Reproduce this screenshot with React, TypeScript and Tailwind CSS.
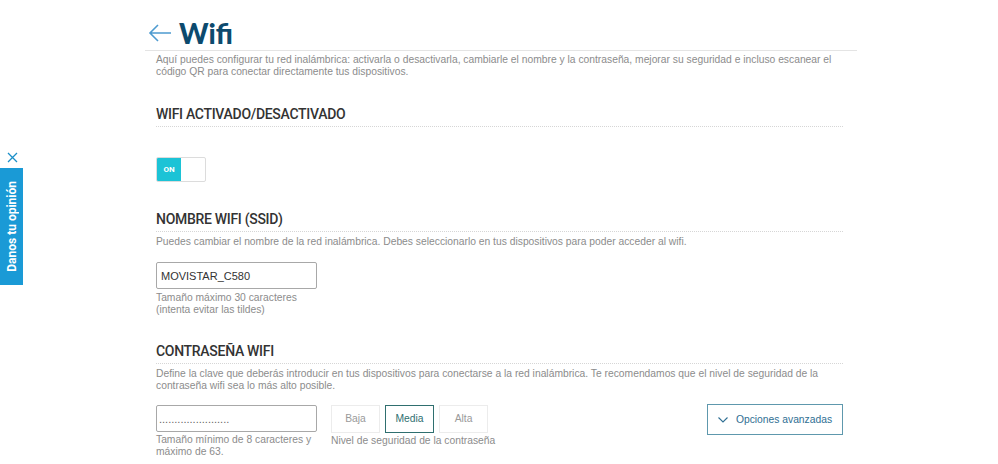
import React, { useState } from 'react';

function SectionTitle({ children }: { children: React.ReactNode }) {
  return (
    <div className="border-b border-dotted border-[#d6d6d6] pb-[3px]">
      <h2 className="font-[family-name:Roboto,sans-serif] text-[14px] font-medium leading-[18px] tracking-[-0.3px] text-[#333]">
        {children}
      </h2>
    </div>
  );
}

export default function App() {
  const [on, setOn] = useState(true);
  const [level, setLevel] = useState<'baja' | 'media' | 'alta'>('media');

  const levelClass = (l: typeof level) =>
    level === l
      ? 'border-[#2f6f6f] text-[#2f6f6f]'
      : 'border-[#ececec] text-[#9a9a9a]';

  return (
    <div className="relative min-h-[464px] bg-white font-[family-name:'Liberation_Sans',Arial,sans-serif] text-[10.3px] text-[#8c8c8c]">
      {/* Danos tu opinión */}
      <div className="absolute left-0 top-[152px] flex w-[24px] flex-col items-center">
        <button className="mb-[5px] text-[#1b8fc8]">
          <svg width="11" height="11" viewBox="0 0 11 11" fill="none" stroke="currentColor" strokeWidth="1.3">
            <path d="M1 1 L10 10 M10 1 L1 10" />
          </svg>
        </button>
        <div className="flex h-[117px] w-[23px] items-center justify-center self-start bg-[#1a9ad6]">
          <span className="rotate-180 whitespace-nowrap font-[family-name:Roboto,sans-serif] text-[12px] font-bold text-white [writing-mode:vertical-rl]">
            Danos tu opinión
          </span>
        </div>
      </div>

      <div className="pl-[145px] pt-[18px]">
        <div className="w-[712px]">
          <div className="flex items-center border-b border-[#e4e4e4] pb-[2px]">
            <button className="ml-[3px] text-[#4e9bd0]">
              <svg width="24" height="20" viewBox="0 0 24 20" fill="none" stroke="currentColor" strokeWidth="1.6">
                <path d="M23 10 H2 M10 2 L2 10 L10 18" />
              </svg>
            </button>
            <h1 className="ml-[7px] font-[family-name:Lato,Roboto,sans-serif] text-[28px] font-black leading-[30px] text-[#0c4a6e]">
              Wifi
            </h1>
          </div>

          <div className="pl-[11px] pr-[14px]">
            <p className="mt-[3px] leading-[12px]">
              Aquí puedes configurar tu red inalámbrica: activarla o desactivarla, cambiarle el nombre y la contraseña, mejorar su seguridad e incluso escanear el código QR para conectar directamente tus dispositivos.
            </p>

            <div className="mt-[27px]">
              <SectionTitle>WIFI ACTIVADO/DESACTIVADO</SectionTitle>
            </div>

            <button
              onClick={() => setOn(!on)}
              className="mt-[30px] flex h-[25px] w-[50px] overflow-hidden rounded-[2px] border border-[#dcdcdc] bg-white"
            >
              <span className="flex h-full w-[24px] items-center justify-center bg-[#1cc3d6] font-[family-name:Roboto,sans-serif] text-[8px] font-bold text-white">
                ON
              </span>
            </button>

            <div className="mt-[28px]">
              <SectionTitle>NOMBRE WIFI (SSID)</SectionTitle>
            </div>
            <p className="mt-[4px] leading-[12px]">
              Puedes cambiar el nombre de la red inalámbrica. Debes seleccionarlo en tus dispositivos para poder acceder al wifi.
            </p>

            <input
              defaultValue="MOVISTAR_C580"
              className="mt-[14px] h-[27px] w-[161px] rounded-[2px] border border-[#a8a8a8] px-[4px] text-[11px] text-[#333] outline-none"
            />
            <p className="mt-[3px] leading-[12px]">
              Tamaño máximo 30 caracteres
              <br />
              (intenta evitar las tildes)
            </p>

            <div className="mt-[26px]">
              <SectionTitle>CONTRASEÑA WIFI</SectionTitle>
            </div>
            <p className="mt-[4px] leading-[12px]">
              Define la clave que deberás introducir en tus dispositivos para conectarse a la red inalámbrica. Te recomendamos que el nivel de seguridad de la contraseña wifi sea lo más alto posible.
            </p>

            <div className="mt-[13px] flex items-start">
              <div className="w-[161px]">
                <input
                  defaultValue="......................."
                  className="h-[27px] w-[161px] rounded-[2px] border border-[#a8a8a8] px-[2px] text-[11px] text-[#666] outline-none"
                />
                <p className="mt-[2px] leading-[12px]">
                  Tamaño mínimo de 8 caracteres y máximo de 63.
                </p>
              </div>

              <div className="ml-[14px]">
                <div className="flex gap-[5px]">
                  <button onClick={() => setLevel('baja')} className={`h-[28px] w-[49px] border ${levelClass('baja')}`}>Baja</button>
                  <button onClick={() => setLevel('media')} className={`h-[28px] w-[49px] border ${levelClass('media')}`}>Media</button>
                  <button onClick={() => setLevel('alta')} className={`h-[28px] w-[49px] border ${levelClass('alta')}`}>Alta</button>
                </div>
                <p className="mt-[2px] leading-[12px]">Nivel de seguridad de la contraseña</p>
              </div>

              <button className="ml-auto mt-[-1px] flex h-[31px] w-[136px] items-center justify-center gap-[8px] border border-[#5e98ad] text-[10.3px] text-[#2f6f93]">
                <svg width="10" height="6" viewBox="0 0 10 6" fill="none" stroke="currentColor" strokeWidth="1.1">
                  <path d="M0.5 0.5 L5 5 L9.5 0.5" />
                </svg>
                Opciones avanzadas
              </button>
            </div>
          </div>
        </div>
      </div>
    </div>
  );
}
